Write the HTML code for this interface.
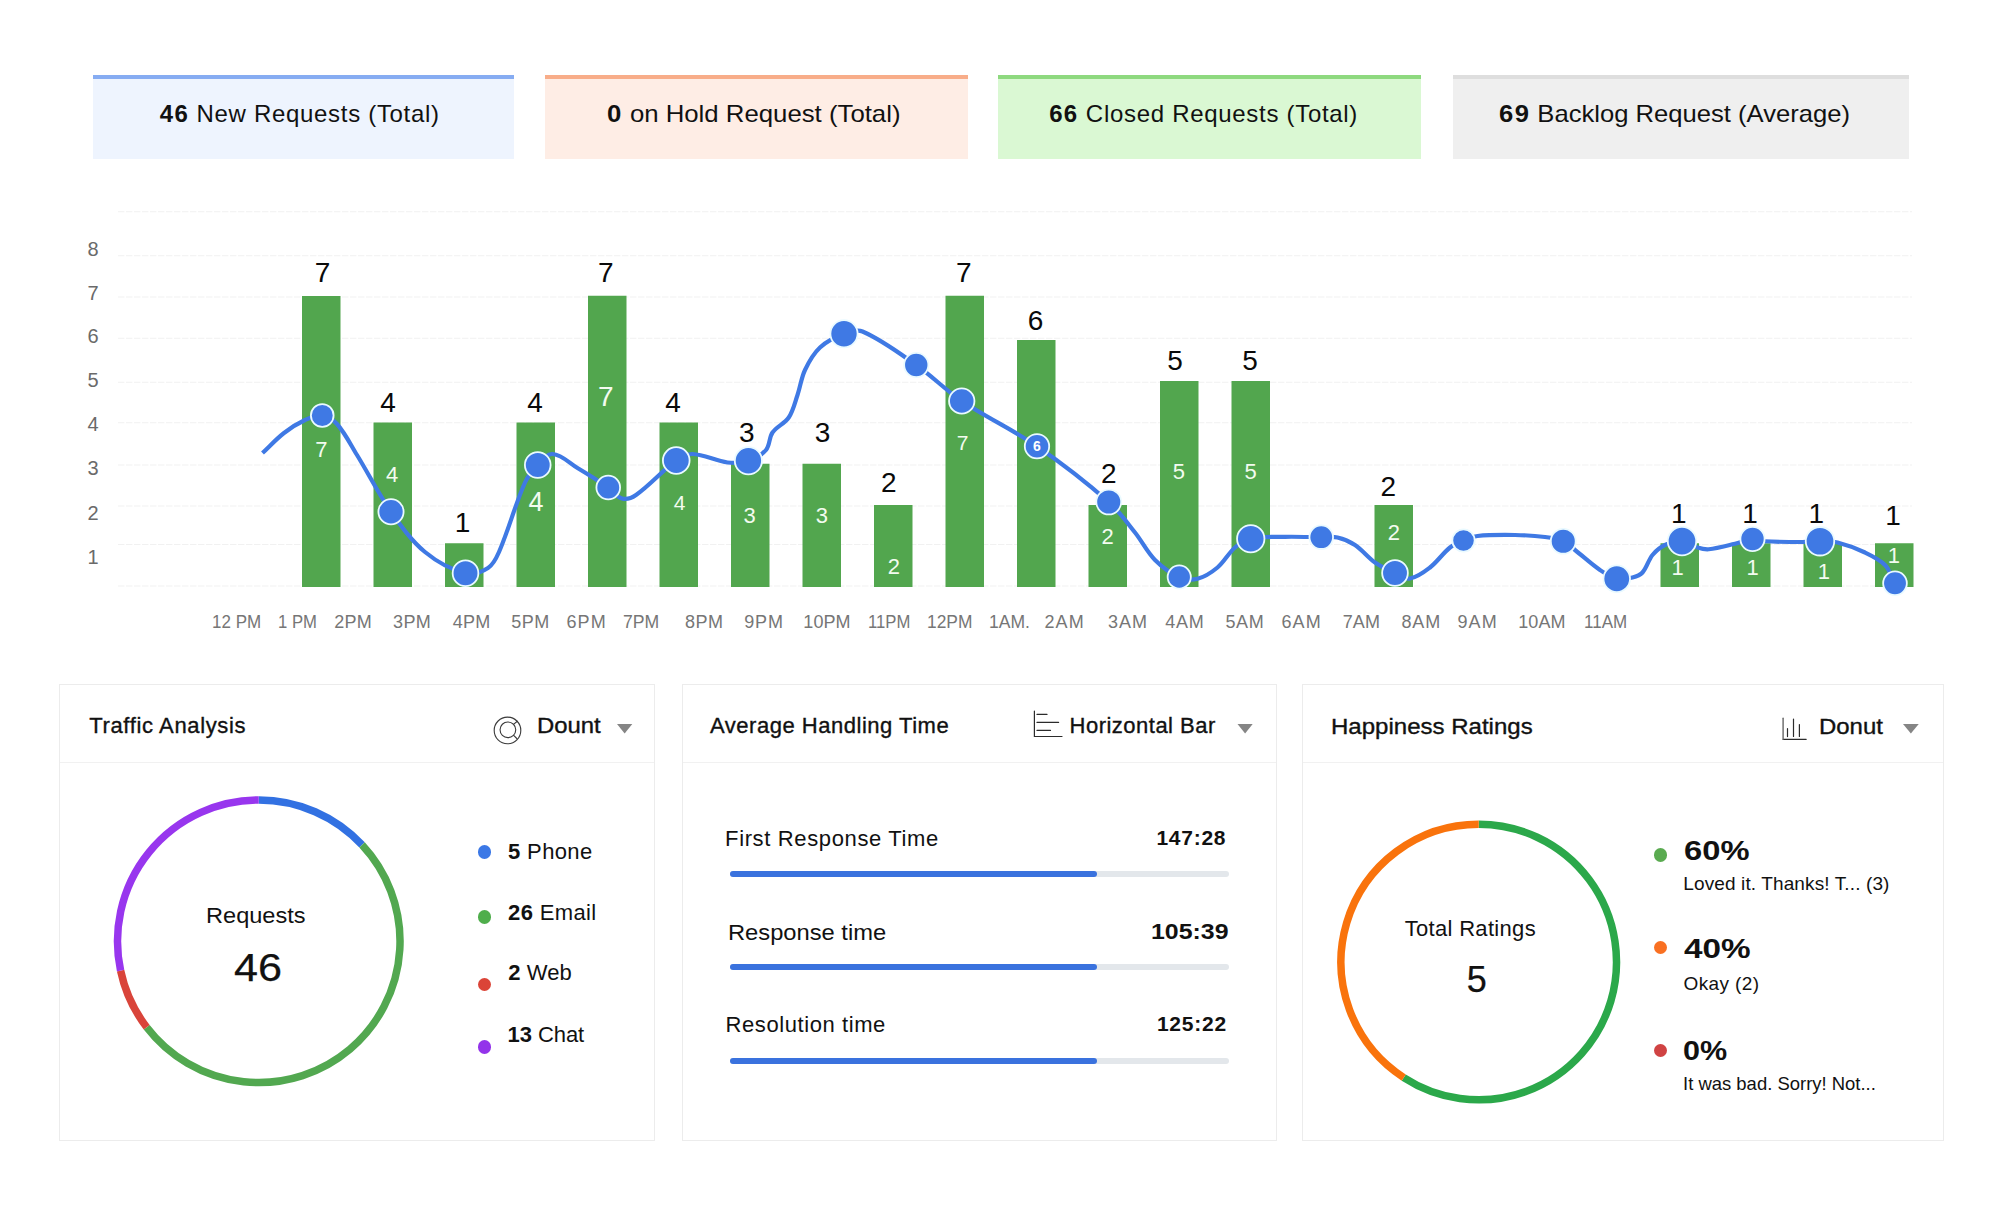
<!DOCTYPE html>
<html lang="en">
<head>
<meta charset="utf-8">
<title>Helpdesk Dashboard</title>
<style>
html,body{margin:0;padding:0;background:#fff}
body{width:2000px;height:1212px;position:relative;overflow:hidden;font-family:'Liberation Sans', sans-serif;color:#111}
.stat{position:absolute;top:75px;height:84px;box-sizing:border-box;border-top:4px solid}
.panel{position:absolute;top:684px;height:457px;box-sizing:border-box;border:1px solid #ececec;background:#fff}
.panel .hd{position:absolute;left:0;right:0;top:0;height:77px;border-bottom:1px solid #f1f1f1}
.tx{position:absolute;white-space:nowrap;line-height:normal;transform-origin:0 0}
.tx b{font-weight:700}
.st b{letter-spacing:1.3px}
.dot{position:absolute;width:13.4px;height:13.4px;border-radius:50%;margin:-6.7px 0 0 -6.7px}
.track{position:absolute;left:730px;width:499px;height:6px;border-radius:3px;background:#e3e7eb}
.track i{position:absolute;left:0;top:0;height:6px;width:367px;border-radius:3px;background:#3a72de;display:block}
svg{position:absolute;left:0;top:0}
svg text{font-family:'Liberation Sans', sans-serif}

</style>
</head>
<body>
<div class="stat" style="left:93px;width:421px;background:#eef4fe;border-color:#86acf2"></div>
<div class="stat" style="left:545px;width:423px;background:#feede5;border-color:#f8ad89"></div>
<div class="stat" style="left:998px;width:423px;background:#daf8d3;border-color:#8ed97f"></div>
<div class="stat" style="left:1453px;width:456px;background:#efefef;border-color:#dedede"></div>
<div class="panel" style="left:59px;width:596px"><div class="hd"></div></div>
<div class="panel" style="left:682px;width:595px"><div class="hd"></div></div>
<div class="panel" style="left:1302px;width:642px"><div class="hd"></div></div>
<div class="track" style="top:870.75px"><i></i></div>
<div class="track" style="top:964px"><i></i></div>
<div class="track" style="top:1057.5px"><i></i></div>
<div class="dot" style="left:484.2px;top:852px;background:#3b78e6"></div>
<div class="dot" style="left:484.2px;top:917px;background:#4fae4c"></div>
<div class="dot" style="left:484.2px;top:984.5px;background:#db4437"></div>
<div class="dot" style="left:484.2px;top:1047px;background:#9333ea"></div>
<div class="dot" style="left:1660.5px;top:855px;background:#5aab50"></div>
<div class="dot" style="left:1660.5px;top:947.5px;background:#f97022"></div>
<div class="dot" style="left:1660.5px;top:1050.5px;background:#d04343"></div>
<svg width="2000" height="1212" viewBox="0 0 2000 1212">
<g stroke="#f1f1f1" stroke-width="1.2" stroke-dasharray="6.4 1.6">
<line x1="118" y1="211.75" x2="1912" y2="211.75"/>
<line x1="118" y1="255.75" x2="1912" y2="255.75"/>
<line x1="118" y1="297" x2="1912" y2="297"/>
<line x1="118" y1="338.25" x2="1912" y2="338.25"/>
<line x1="118" y1="382.25" x2="1912" y2="382.25"/>
<line x1="118" y1="422.75" x2="1912" y2="422.75"/>
<line x1="118" y1="465" x2="1912" y2="465"/>
<line x1="118" y1="506" x2="1912" y2="506"/>
<line x1="118" y1="544.5" x2="1912" y2="544.5"/>
<line x1="118" y1="586" x2="1912" y2="586"/>
</g>
<g fill="#52a64e">
<rect x="302" y="296" width="38.5" height="291"/>
<rect x="373.5" y="422.5" width="38.5" height="164.5"/>
<rect x="445" y="543.25" width="38.5" height="43.75"/>
<rect x="516.5" y="422.5" width="38.5" height="164.5"/>
<rect x="588" y="295.75" width="38.5" height="291.25"/>
<rect x="659.5" y="422.5" width="38.5" height="164.5"/>
<rect x="731" y="463.75" width="38.5" height="123.25"/>
<rect x="802.5" y="463.75" width="38.5" height="123.25"/>
<rect x="874" y="505" width="38.5" height="82"/>
<rect x="945.5" y="295.75" width="38.5" height="291.25"/>
<rect x="1017" y="340" width="38.5" height="247"/>
<rect x="1088.5" y="505" width="38.5" height="82"/>
<rect x="1160" y="381" width="38.5" height="206"/>
<rect x="1231.5" y="381" width="38.5" height="206"/>
<rect x="1374.5" y="505" width="38.5" height="82"/>
<rect x="1660.5" y="543.25" width="38.5" height="43.75"/>
<rect x="1732" y="543.25" width="38.5" height="43.75"/>
<rect x="1803.5" y="543.25" width="38.5" height="43.75"/>
<rect x="1875" y="543.25" width="38.5" height="43.75"/>
</g>
<g font-size="20" fill="#6a6a6a" text-anchor="middle">
<text x="93" y="255.5">8</text>
<text x="93" y="299.5">7</text>
<text x="93" y="343">6</text>
<text x="93" y="387">5</text>
<text x="93" y="431">4</text>
<text x="93" y="475">3</text>
<text x="93" y="519.5">2</text>
<text x="93" y="563.75">1</text>
</g>
<g font-size="28" fill="#0a0a0a" text-anchor="middle">
<text x="322.5" y="282">7</text>
<text x="388" y="411.5">4</text>
<text x="462.5" y="532">1</text>
<text x="535" y="411.5">4</text>
<text x="605.75" y="282">7</text>
<text x="673" y="411.5">4</text>
<text x="746.75" y="441.5">3</text>
<text x="822.5" y="441.5">3</text>
<text x="888.75" y="492">2</text>
<text x="963.75" y="282">7</text>
<text x="1035.5" y="329.5">6</text>
<text x="1108.75" y="483.25">2</text>
<text x="1175" y="369.5">5</text>
<text x="1250" y="369.5">5</text>
<text x="1388.25" y="495.75">2</text>
<text x="1678.75" y="523.25">1</text>
<text x="1750" y="523.25">1</text>
<text x="1816.25" y="523.25">1</text>
<text x="1893" y="525">1</text>
</g>
<g fill="#f3fbf0" text-anchor="middle">
<text x="321.25" y="456.63" font-size="22">7</text>
<text x="392" y="482.38" font-size="22">4</text>
<text x="536" y="510.67" font-size="27">4</text>
<text x="605.75" y="406.02" font-size="28">7</text>
<text x="679.5" y="510.02" font-size="21">4</text>
<text x="749.5" y="522.88" font-size="22">3</text>
<text x="821.75" y="522.88" font-size="22">3</text>
<text x="893.75" y="573.88" font-size="22">2</text>
<text x="962.5" y="450.02" font-size="21">7</text>
<text x="1107.5" y="543.63" font-size="22">2</text>
<text x="1178.75" y="479.13" font-size="22">5</text>
<text x="1250.5" y="479.13" font-size="22">5</text>
<text x="1393.75" y="540.38" font-size="22">2</text>
<text x="1677.5" y="574.88" font-size="22">1</text>
<text x="1752.5" y="574.88" font-size="22">1</text>
<text x="1823.75" y="579.13" font-size="22">1</text>
<text x="1893.75" y="563.38" font-size="22">1</text>
</g>
<path d="M262.5,453 C269.67,446.33 276.27,439 284,433 C290.5,427.95 297.51,423.43 305,420 C310.4,417.53 316.35,414.76 322.25,415.5 C327.88,416.2 333.25,419.74 337,424 C345.12,433.23 350.56,444.53 357,455 C368.56,473.78 378.34,493.69 391,511.75 C401.08,526.13 411.46,540.82 425,552 C436.76,561.71 450.72,569.5 465.5,573.25 C472.96,575.15 481.5,572.13 488,568 C493.47,564.53 496.43,557.94 499,552 C508.82,529.3 514.94,505.09 525,482.5 C527.94,475.91 532.74,470.19 537.75,465 C542.01,460.59 546.38,453.54 552.5,454 C562.02,454.72 569.31,463.08 577.5,468 C587.9,474.25 598.24,480.64 608.25,487.5 C613.09,490.82 616.33,496.97 622,498.5 C626.64,499.76 632.06,497.76 636,495 C650.47,484.86 661.95,470.88 676.25,460.5 C680.97,457.07 686.67,453.77 692.5,454 C704.5,454.47 715.58,461.05 727.5,462.5 C734.44,463.34 741.75,462.96 748.4,460.8 C754.95,458.67 761.54,455.24 766,450 C770.03,445.26 768.93,437.6 772.5,432.5 C776.73,426.46 784.66,423.63 788.75,417.5 C793.21,410.8 794.9,402.61 797.5,395 C800.32,386.77 801.28,377.86 805,370 C808.86,361.85 813.39,353.63 820,347.5 C826.75,341.23 835.38,337.05 844,333.8 C849.82,331.61 856.8,329.04 862.5,331.5 C881.88,339.87 898.96,352.89 916.25,365 C932.09,376.09 945.7,390.2 961.75,401 C986.03,417.34 1012.88,429.68 1037,446.25 C1061.96,463.4 1086.01,481.99 1108.75,502 C1118.82,510.86 1126.64,522.01 1135,532.5 C1142.07,541.36 1147.01,551.96 1155,560 C1161.96,567 1170.22,573.02 1179.25,577 C1184.84,579.47 1191.57,580.22 1197.5,578.75 C1204.92,576.91 1211.62,572.4 1217.5,567.5 C1224.31,561.83 1228.3,553.29 1235,547.5 C1239.54,543.57 1244.88,540.01 1250.75,538.75 C1261.93,536.36 1273.57,537.05 1285,536.8 C1297.08,536.53 1309.17,537.04 1321.25,537.2 C1326.67,537.27 1332.22,536.28 1337.5,537.5 C1343.68,538.93 1349.72,541.48 1355,545 C1362.37,549.91 1367.74,557.42 1375,562.5 C1381.17,566.82 1388.15,569.87 1395,573 C1399.84,575.21 1404.74,579.33 1410,578.5 C1417.52,577.32 1423.99,572.16 1430,567.5 C1437.45,561.72 1442.66,553.42 1450,547.5 C1453.95,544.32 1458.82,542.46 1463.5,540.5 C1468.02,538.61 1472.63,536.52 1477.5,536 C1489.93,534.67 1502.5,534.81 1515,535 C1525.02,535.15 1535.06,535.71 1545,537 C1551.19,537.8 1557.52,538.77 1563.25,541.25 C1567.73,543.19 1571.15,546.99 1575,550 C1583.41,556.58 1591.21,563.95 1600,570 C1605.19,573.57 1610.61,577.33 1616.75,578.75 C1621.88,579.93 1627.38,578.74 1632.5,577.5 C1636.12,576.62 1640.02,575.29 1642.5,572.5 C1646.96,567.48 1648.25,560.2 1652.5,555 C1655.88,550.87 1660.17,547.27 1665,545 C1670.26,542.52 1676.2,540.65 1682,541.1 C1687.57,541.53 1692.15,545.87 1697.5,547.5 C1701.13,548.61 1704.97,549.63 1708.75,549.25 C1717.65,548.36 1726.3,545.79 1735,543.75 C1740.89,542.37 1746.48,539.5 1752.5,539 C1756.72,538.65 1760.77,541 1765,541.25 C1777.48,542 1790,542 1802.5,542 C1808.34,542 1814.16,541.17 1820,541.25 C1825.85,541.33 1831.83,541.08 1837.5,542.5 C1846.96,544.87 1856.19,548.32 1865,552.5 C1872.1,555.87 1879.51,559.37 1885,565 C1889.84,569.97 1891.67,577.17 1895,583.25" fill="none" stroke="#3f79e4" stroke-width="4.2" stroke-linecap="butt" stroke-linejoin="round"/>
<g fill="#3f79e4" stroke="#eafaff" stroke-width="1.8">
<circle cx="322.25" cy="415.5" r="11.35"/>
<circle cx="391" cy="511.75" r="12.6"/>
<circle cx="465.5" cy="573.25" r="12.85"/>
<circle cx="537.75" cy="465" r="12.85"/>
<circle cx="608.25" cy="487.5" r="11.85"/>
<circle cx="676.25" cy="460.5" r="13.35"/>
<circle cx="748.4" cy="460.8" r="13.6"/>
<circle cx="844" cy="333.8" r="13.6"/>
<circle cx="916.25" cy="365" r="12.1"/>
<circle cx="961.75" cy="401" r="12.7"/>
<circle cx="1037" cy="446.25" r="12.2"/>
<circle cx="1108.75" cy="502" r="12.45"/>
<circle cx="1179.25" cy="577" r="11.6"/>
<circle cx="1250.75" cy="538.75" r="13.7"/>
<circle cx="1321.25" cy="537.2" r="11.8"/>
<circle cx="1395" cy="573" r="12.85"/>
<circle cx="1463.5" cy="540.5" r="11.2"/>
<circle cx="1563.25" cy="541.25" r="12.45"/>
<circle cx="1616.75" cy="578.75" r="13.3"/>
<circle cx="1682" cy="541.1" r="14.25"/>
<circle cx="1752.5" cy="539" r="12.1"/>
<circle cx="1820" cy="541.25" r="14.25"/>
<circle cx="1895" cy="583.25" r="11.85"/>
</g>
<text x="1037" y="451.3" font-size="14" font-weight="700" fill="#fff" text-anchor="middle">6</text>
<g fill="none" stroke-width="7.5">
<path d="M258.75,800 A141.25,141.25 0 0 1 362.05,844.92" stroke="#3271e2"/>
<path d="M362.05,844.92 A141.25,141.25 0 1 1 146.69,1027.24" stroke="#52a850"/>
<path d="M146.69,1027.24 A141.25,141.25 0 0 1 120.59,970.62" stroke="#d9443a"/>
<path d="M120.59,970.62 A141.25,141.25 0 0 1 258.75,800" stroke="#9836ee"/>
<path d="M1478.75,824.25 A137.75,137.75 0 1 1 1403.73,1077.53" stroke="#2ba84a"/>
<path d="M1403.73,1077.53 A137.75,137.75 0 0 1 1478.75,824.25" stroke="#f9730c"/>
</g>
<g fill="none" stroke="#3a3a3a" stroke-width="1.1">
<circle cx="507.5" cy="730.4" r="13.3"/><circle cx="507.9" cy="729.8" r="7.85"/><path d="M513.4,735.2 L517.3,739 M513.8,724.2 L517.6,721"/>
</g>
<g fill="none" stroke="#2b2b2b" stroke-width="1.2" stroke-linecap="round">
<path d="M1034.4,711 V736.5 H1062 M1037,714.4 H1047 M1037,722.4 H1058.6 M1037,730.4 H1050.5"/>
<path d="M1787.5,728.5 V736.6 M1793.5,719 V736.4 M1799.4,724.6 V736.5 M1783.1,739.3 H1806.2"/>
<path d="M1783.1,718.2 V739.3" stroke="#666" stroke-width="1.4"/>
</g>
<g fill="#858585">
<path d="M617,724 H632.3 L624.65,733.6 Z"/>
<path d="M1237.5,724 H1252.7 L1245.1,733.6 Z"/>
<path d="M1903,724 H1918.75 L1910.88,733.6 Z"/>
</g>
</svg>
<span class="tx st" style="left:159.85px;top:100px;font-size:24px;letter-spacing:0.69px;"><b>46</b> New Requests (Total)</span>
<span class="tx st" style="left:606.7px;top:100px;font-size:24px;transform:scaleX(1.0733);"><b>0</b> on Hold Request (Total)</span>
<span class="tx st" style="left:1049.2px;top:100px;font-size:24px;letter-spacing:0.7px;"><b>66</b> Closed Requests (Total)</span>
<span class="tx st" style="left:1499.2px;top:100px;font-size:24px;transform:scaleX(1.0668);"><b>69</b> Backlog Request (Average)</span>
<span class="tx" style="left:212.07px;top:612px;font-size:18px;transform:scaleX(0.9442);color:#767676;">12 PM</span>
<span class="tx" style="left:277.55px;top:612px;font-size:18px;transform:scaleX(0.9268);color:#767676;">1 PM</span>
<span class="tx" style="left:334.29px;top:612px;font-size:18px;letter-spacing:0.2px;color:#767676;">2PM</span>
<span class="tx" style="left:393.1px;top:612px;font-size:18px;letter-spacing:0.29px;color:#767676;">3PM</span>
<span class="tx" style="left:452.83px;top:612px;font-size:18px;letter-spacing:0.16px;color:#767676;">4PM</span>
<span class="tx" style="left:511.28px;top:612px;font-size:18px;letter-spacing:0.43px;color:#767676;">5PM</span>
<span class="tx" style="left:566.51px;top:612px;font-size:18px;letter-spacing:1.09px;color:#767676;">6PM</span>
<span class="tx" style="left:623.3px;top:612px;font-size:18px;transform:scaleX(0.9800);color:#767676;">7PM</span>
<span class="tx" style="left:684.92px;top:612px;font-size:18px;letter-spacing:0.51px;color:#767676;">8PM</span>
<span class="tx" style="left:744.32px;top:612px;font-size:18px;letter-spacing:0.8px;color:#767676;">9PM</span>
<span class="tx" style="left:803.3px;top:612px;font-size:18px;letter-spacing:0.09px;color:#767676;">10PM</span>
<span class="tx" style="left:867.55px;top:612px;font-size:18px;transform:scaleX(0.9267);color:#767676;">11PM</span>
<span class="tx" style="left:927.04px;top:612px;font-size:18px;transform:scaleX(0.9655);color:#767676;">12PM</span>
<span class="tx" style="left:989.01px;top:612px;font-size:18px;transform:scaleX(0.9743);color:#767676;">1AM.</span>
<span class="tx" style="left:1044.53px;top:612px;font-size:18px;letter-spacing:1.08px;color:#767676;">2AM</span>
<span class="tx" style="left:1108px;top:612px;font-size:18px;letter-spacing:0.97px;color:#767676;">3AM</span>
<span class="tx" style="left:1165.33px;top:612px;font-size:18px;letter-spacing:0.68px;color:#767676;">4AM</span>
<span class="tx" style="left:1225.46px;top:612px;font-size:18px;letter-spacing:0.61px;color:#767676;">5AM</span>
<span class="tx" style="left:1281.51px;top:612px;font-size:18px;letter-spacing:1.09px;color:#767676;">6AM</span>
<span class="tx" style="left:1342.81px;top:612px;font-size:18px;letter-spacing:0.06px;color:#767676;">7AM</span>
<span class="tx" style="left:1401.42px;top:612px;font-size:18px;letter-spacing:0.88px;color:#767676;">8AM</span>
<span class="tx" style="left:1457.49px;top:612px;font-size:18px;letter-spacing:1.1px;color:#767676;">9AM</span>
<span class="tx" style="left:1518.3px;top:612px;font-size:18px;letter-spacing:0.04px;color:#767676;">10AM</span>
<span class="tx" style="left:1583.57px;top:612px;font-size:18px;transform:scaleX(0.9439);color:#767676;">11AM</span>
<span class="tx" style="left:89.28px;top:713px;font-size:22px;letter-spacing:0.63px;-webkit-text-stroke:0.35px #111;">Traffic Analysis</span>
<span class="tx" style="left:537.05px;top:713px;font-size:22px;transform:scaleX(1.0855);-webkit-text-stroke:0.35px #111;">Dount</span>
<span class="tx" style="left:206.3px;top:903px;font-size:22px;transform:scaleX(1.0717);">Requests</span>
<span class="tx" style="left:233.7px;top:946.75px;font-size:38px;transform:scaleX(1.1353);-webkit-text-stroke:0.25px #111;">46</span>
<span class="tx" style="left:508.03px;top:839.25px;font-size:22px;letter-spacing:0.36px;"><b>5</b> Phone</span>
<span class="tx" style="left:508.06px;top:900px;font-size:22px;letter-spacing:0.36px;"><b>26</b> Email</span>
<span class="tx" style="left:508.17px;top:960px;font-size:22px;letter-spacing:0.12px;"><b>2</b> Web</span>
<span class="tx" style="left:507.55px;top:1022px;font-size:22px;letter-spacing:-0.07px;"><b>13</b> Chat</span>
<span class="tx" style="left:710px;top:713px;font-size:22px;letter-spacing:0.52px;-webkit-text-stroke:0.35px #111;">Average Handling Time</span>
<span class="tx" style="left:1069.55px;top:713px;font-size:22px;letter-spacing:0.49px;-webkit-text-stroke:0.35px #111;">Horizontal Bar</span>
<span class="tx" style="left:725.05px;top:825.75px;font-size:22px;letter-spacing:0.64px;">First Response Time</span>
<span class="tx" style="left:1156.45px;top:826px;font-size:21px;font-weight:700;letter-spacing:0.74px;">147:28</span>
<span class="tx" style="left:727.55px;top:920px;font-size:22px;transform:scaleX(1.0777);">Response time</span>
<span class="tx" style="left:1150.71px;top:919px;font-size:22px;font-weight:700;transform:scaleX(1.1310);">105:39</span>
<span class="tx" style="left:725.55px;top:1012px;font-size:22px;letter-spacing:0.58px;">Resolution time</span>
<span class="tx" style="left:1156.92px;top:1012.25px;font-size:21px;font-weight:700;letter-spacing:0.76px;">125:22</span>
<span class="tx" style="left:1330.8px;top:713.75px;font-size:22px;transform:scaleX(1.0922);-webkit-text-stroke:0.35px #111;">Happiness Ratings</span>
<span class="tx" style="left:1818.8px;top:713.75px;font-size:22px;transform:scaleX(1.0885);-webkit-text-stroke:0.35px #111;">Donut</span>
<span class="tx" style="left:1404.65px;top:916.25px;font-size:22px;letter-spacing:0.32px;">Total Ratings</span>
<span class="tx" style="left:1466.7px;top:959.3px;font-size:36px;-webkit-text-stroke:0.25px #111;">5</span>
<span class="tx" style="left:1683.61px;top:834.6px;font-size:28px;font-weight:700;transform:scaleX(1.1681);">60%</span>
<span class="tx" style="left:1683.3px;top:873.4px;font-size:19px;letter-spacing:0.12px;">Loved it. Thanks! T... (3)</span>
<span class="tx" style="left:1683.96px;top:933.3px;font-size:28px;font-weight:700;transform:scaleX(1.1884);">40%</span>
<span class="tx" style="left:1683.49px;top:973.4px;font-size:19px;letter-spacing:0.38px;">Okay (2)</span>
<span class="tx" style="left:1683.3px;top:1034.6px;font-size:28px;font-weight:700;transform:scaleX(1.0913);">0%</span>
<span class="tx" style="left:1683.3px;top:1072.6px;font-size:19px;transform:scaleX(0.9716);">It was bad. Sorry! Not...</span>
</body>
</html>
